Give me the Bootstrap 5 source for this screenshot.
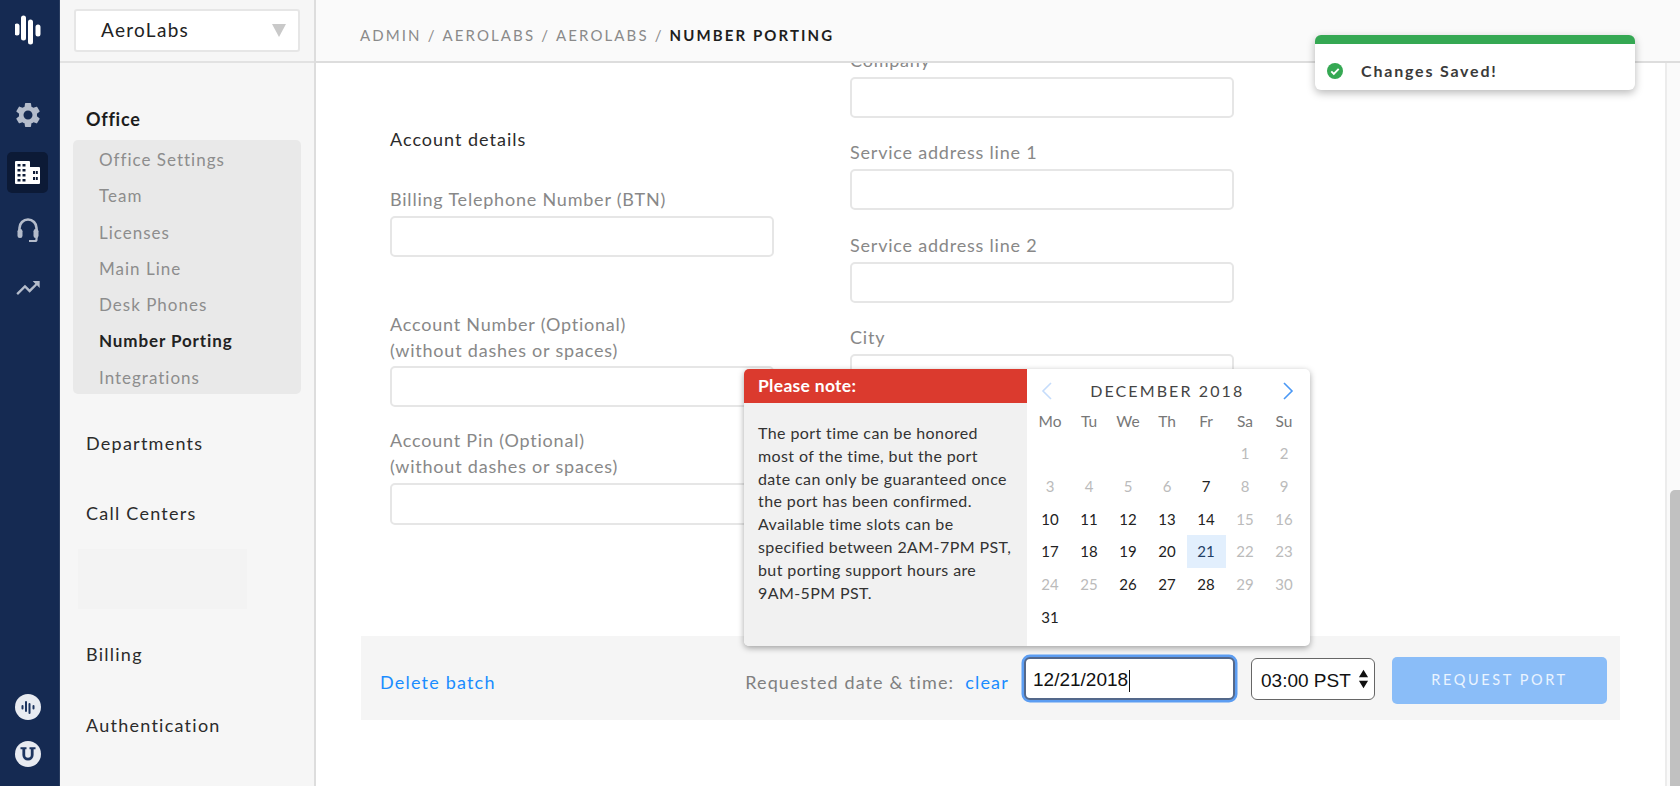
<!DOCTYPE html>
<html lang="en">
<head>
<meta charset="utf-8">
<title>Number Porting</title>
<link href="https://cdn.jsdelivr.net/npm/bootstrap@5.3.0/dist/css/bootstrap.min.css" rel="stylesheet">
<style>
html,body{height:786px;overflow:hidden}
body{font-family:Lato,"Liberation Sans",sans-serif;font-size:18px;color:#222;background:#fff;letter-spacing:.75px}
.app-shell{height:786px;overflow:hidden}
.rail{width:60px;background:#152a52;flex:none;padding-top:15px;overflow:hidden;border-right:1px solid #2a3d60}
.rail-logo{width:30px;height:30px;display:block;margin:0 auto 49px;flex:none}
.rail-item{width:41px;height:41px;border-radius:5px;margin:0 0 17px 7px;flex:none}
.rail-item.is-on{background:#0c1a36}
.rail-item.trend{margin-top:-1px}
.rail-dot{width:26px;height:26px;border-radius:50%;background:#e8ebf1;margin:0 0 21px 15px;flex:none}
.rail-foot{margin-bottom:-49px}
.sidepane{width:256px;flex:none;background:#f6f6f6;border-right:2px solid #ddd}
.side-top{height:63px;flex:none;border-bottom:2px solid #e2e2e2;padding:9px 14px 0 14px}
.org-pick{height:43px;background:#fff;border:2px solid #e6e6e6;border-radius:3px;padding:0 12px 0 25px;font-size:19px;letter-spacing:1.3px;color:#222}
.org-arrow{width:0;height:0;border-left:7.5px solid transparent;border-right:7.5px solid transparent;border-top:13px solid #c9c9c9}
.side-head{line-height:24px;padding-left:26px;color:#2b2b2b;font-size:18px;letter-spacing:1.25px}
.side-head.first{margin-top:44px;font-weight:700;color:#1c1c1c;letter-spacing:.75px}
.side-head.dept{margin-top:37px}
.side-head.call{margin-top:46px}
.side-head.auth{margin-top:47px}
.side-group{margin:9px 13px 0 13px;height:254px;background:#e9e9e9;border-radius:5px;padding:2px 0 0 26px;flex:none}
.side-link{display:block;line-height:36.3px;color:#8d8d8d;text-decoration:none;font-size:17px;letter-spacing:1px}
.side-link.is-on{color:#222;font-weight:700;letter-spacing:.9px}
.side-blank{width:169px;height:60px;background:#f3f3f3;margin:24px 0 33px 18px;flex:none}
.mainpane{min-width:0}
.crumbs{height:63px;flex:none;background:#fafafa;border-bottom:2px solid #ddd;padding:10px 0 0 44px;font-size:15px;letter-spacing:2.1px;color:#8a8a8a;text-transform:uppercase;line-height:1}
.crumbs b{color:#1e1e1e;font-weight:700;letter-spacing:2.1px}
.crumbs span{margin-right:6px}
.scroll-area{min-height:0}
.scroll-body{padding:0 45px;min-width:0}
.form-area{height:573px;overflow:hidden;padding-left:29px;gap:76px}
.form-col{width:384px}
.form-col.left{padding-top:64px}
.form-col.right{margin-top:-15px}
.sect-title{line-height:24px;margin-bottom:36px;color:#2b2b2b;letter-spacing:1px}
.fld-label{display:block;line-height:24px;margin-bottom:5px;color:#888;letter-spacing:.79px}
.fld-label.two{line-height:25.7px;margin-bottom:3px}
.fld-label.tight{margin-bottom:3px}
.fld-box{height:41px;border:2px solid #e6e6e6;border-radius:5px;background:#fff;margin-bottom:22.4px;padding:0}
.left .fld-box.a{margin-bottom:55px}
.left .fld-box.b{margin-bottom:21px}
.left .fld-box.c{height:42px}
.action-bar{height:84px;background:#f5f5f5;padding:0 13px 0 19px}
.act-link{color:#1a8cff;text-decoration:none;font-size:18px;letter-spacing:1.2px;margin-top:8px}
.act-note{color:#808080;margin-left:auto;letter-spacing:1.1px;margin-top:8px}
.act-clear{margin:8px 15px 0 11px}
.date-box{width:211px;height:43px;background:#fff;border:2px solid #54688a;border-radius:6px;box-shadow:0 0 0 2.5px #5c9df2;padding:4px 7px 0;font-size:19px;letter-spacing:0;font-family:"Liberation Sans",sans-serif;color:#111;margin-top:1px}
.caret-line{display:inline-block;width:1px;height:22px;background:#111;margin-left:1px}
.time-box{width:124px;height:42px;margin:1px 0 0 16px;border:1.5px solid #666;border-radius:6px;background-color:#fff;padding:5px 0 0 9px;font-size:19px;letter-spacing:0;font-family:"Liberation Sans",sans-serif;color:#111;box-shadow:none;background-size:11px 22px;background-position:right 5px center;background-repeat:no-repeat;background-image:url("data:image/svg+xml,%3Csvg xmlns='http://www.w3.org/2000/svg' viewBox='0 0 12 22'%3E%3Cpath d='M6 1l5 8H1zM6 21l-5-8h10z' fill='%23111'/%3E%3C/svg%3E")}
.req-btn{width:215px;height:47px;margin:4px 0 0 17px;background:#8abdf8;border:0;border-radius:5px;color:#fff;font-size:14.5px;letter-spacing:2.6px;opacity:1}
.req-btn:disabled{background:#8abdf8;color:#eaf4ff;opacity:1}
.track{width:15px;flex:none;background:#fafafa;border-left:2px solid #ececec;padding:427px 0 0 3px}
.thumb{width:10px;height:296px;background:#c1c1c1;border-radius:5px 0 0 0}
.toast-saved{position:absolute;left:999px;top:35px;width:320px;height:55px;background:#fff;border-top:9px solid #35a853;border-radius:6px;box-shadow:0 3px 8px rgba(0,0,0,.28);padding:8px 0 0 12px;font-size:16px;letter-spacing:1.8px;color:#3a3a3a;font-weight:700;gap:14px;z-index:5}
.date-pop{position:absolute;left:428px;top:369px;width:566px;height:277px;background:#fff;border-radius:5px;box-shadow:0 2px 6px rgba(0,0,0,.35);overflow:hidden;z-index:4}
.note-pane{width:283px;background:#f1f1f1;flex:none}
.note-head{height:34px;background:#db3a2e;color:#fff;font-weight:700;font-size:17.5px;line-height:34px;padding-left:14px;letter-spacing:.3px}
.note-body{padding:19px 15px 0 14px;font-size:16px;line-height:22.8px;color:#333;letter-spacing:.4px}
.cal-pane{flex:1;padding:0 3px 0 3.5px}
.cal-title{height:43px;margin-bottom:-7.5px;padding:0 13px 0 10px;font-size:16px;letter-spacing:2.1px;color:#444}
.cal-grid{display:grid;grid-template-columns:repeat(7,39px);grid-auto-rows:32.7px;text-align:center;font-size:15px;letter-spacing:0;color:#222;line-height:32px}
.cal-grid .wk{color:#777;font-size:15.5px}
.cal-grid .off{color:#bbb}
.cal-grid .pick{background:#e2effd;color:#1f3f66}
</style>
</head>
<body>
<div class="app-shell d-flex position-relative">
  <nav class="rail d-flex flex-column">
    <svg class="rail-logo" viewBox="0 0 30 30"><g stroke="#fff" stroke-width="5" stroke-linecap="round"><path d="M2 11v7M8.500 3v20M15.500 7v20M23 12v7"/></g></svg>
    <div class="rail-item d-flex align-items-center justify-content-center">
      <svg width="30" height="30" viewBox="0 0 24 24" fill="#b4bccb"><path d="M19.14 12.94c.04-.3.06-.61.06-.94 0-.32-.02-.64-.07-.94l2.03-1.58c.18-.14.23-.41.12-.61l-1.92-3.32c-.12-.22-.37-.29-.59-.22l-2.39.96c-.5-.38-1.03-.7-1.62-.94l-.36-2.54c-.04-.24-.24-.41-.48-.41h-3.84c-.24 0-.43.17-.47.41l-.36 2.54c-.59.24-1.13.57-1.62.94l-2.39-.96c-.22-.08-.47 0-.59.22L2.74 8.87c-.12.21-.08.47.12.61l2.03 1.58c-.05.3-.09.63-.09.94s.02.64.07.94l-2.03 1.58c-.18.14-.23.41-.12.61l1.92 3.32c.12.22.37.29.59.22l2.39-.96c.5.38 1.03.7 1.62.94l.36 2.54c.05.24.24.41.48.41h3.84c.24 0 .44-.17.47-.41l.36-2.54c.59-.24 1.13-.56 1.62-.94l2.39.96c.22.08.47 0 .59-.22l1.92-3.32c.12-.22.07-.47-.12-.61l-2.01-1.58zM12 15.6c-1.98 0-3.6-1.62-3.6-3.6s1.62-3.6 3.6-3.6 3.6 1.62 3.6 3.6-1.62 3.6-3.6 3.6z"/></svg>
    </div>
    <div class="rail-item is-on d-flex align-items-center justify-content-center">
      <svg width="25" height="24" viewBox="0 0 25 24"><path fill="#fff" fill-rule="evenodd" d="M1 0h13a1 1 0 0 1 1 1v5h9a1 1 0 0 1 1 1v15a1 1 0 0 1-1 1H1a1 1 0 0 1-1-1V1a1 1 0 0 1 1-1zM2.500 3v2.500h3V3zM7.500 3v2.500h3V3zM2.500 8v2.500h3V8zM7.500 8v2.500h3V8zM2.500 13v2.500h3V13zM7.500 13v2.500h3V13zM2.500 18v2.500h3V18zM7.500 18v2.500h3V18zM18 10v3h2v-3zM18 16v3h2v-3zM20.800 10v3h2v-3zM20.800 16v3h2v-3z"/></svg>
    </div>
    <div class="rail-item d-flex align-items-center justify-content-center">
      <svg width="22" height="25" viewBox="0 0 22 25" fill="none"><path d="M2.500 13V10a8.500 8.500 0 0 1 17 0v3" stroke="#b4bccb" stroke-width="2.600"/><rect x="0.500" y="11" width="5" height="9" rx="2.300" fill="#b4bccb"/><rect x="16.500" y="11" width="5" height="9" rx="2.300" fill="#b4bccb"/><path d="M19.500 19v2.500a1.500 1.500 0 0 1-1.500 1.500h-6" stroke="#b4bccb" stroke-width="2.200"/></svg>
    </div>
    <div class="rail-item trend d-flex align-items-center justify-content-center">
      <svg width="28" height="28" viewBox="0 0 24 24" fill="#b4bccb"><path d="M16 6l2.290 2.290-4.880 4.880-4-4L2 16.590 3.410 18l6-6 4 4 6.300-6.290L22 12V6z"/></svg>
    </div>
    <div class="rail-foot mt-auto d-flex flex-column">
      <div class="rail-dot d-flex align-items-center justify-content-center">
        <svg width="14" height="14" viewBox="0 0 14 14"><g stroke="#1d3560" stroke-width="2" stroke-linecap="round"><path d="M1.500 6v2.500M5 2v9M8.500 4v9M12.500 6v2.500"/></g></svg>
      </div>
      <div class="rail-dot d-flex align-items-center justify-content-center">
        <svg width="16" height="15" viewBox="0 0 16 15" fill="none"><path d="M3.800 1.500v6.500a4.200 4.200 0 0 0 8.400 0V1.500" stroke="#1d3560" stroke-width="2.800"/><path d="M.5 1.300h6M9.500 1.300h6" stroke="#1d3560" stroke-width="2"/></svg>
      </div>
      <div class="rail-dot"></div>
    </div>
  </nav>

  <aside class="sidepane d-flex flex-column">
    <div class="side-top">
      <div class="org-pick d-flex align-items-center justify-content-between">
        <span>AeroLabs</span><span class="org-arrow"></span>
      </div>
    </div>
    <div class="side-head first">Office</div>
    <div class="side-group">
      <a class="side-link" href="#">Office Settings</a>
      <a class="side-link" href="#">Team</a>
      <a class="side-link" href="#">Licenses</a>
      <a class="side-link" href="#">Main Line</a>
      <a class="side-link" href="#">Desk Phones</a>
      <a class="side-link is-on" href="#">Number Porting</a>
      <a class="side-link" href="#">Integrations</a>
    </div>
    <div class="side-head dept">Departments</div>
    <div class="side-head call">Call Centers</div>
    <div class="side-blank"></div>
    <div class="side-head">Billing</div>
    <div class="side-head auth">Authentication</div>
  </aside>

  <div class="mainpane flex-grow-1 d-flex flex-column position-relative">
    <header class="crumbs d-flex align-items-center">
      <span>Admin</span><span>/</span><span>AeroLabs</span><span>/</span><span>AeroLabs</span><span>/</span><b>Number Porting</b>
    </header>
    <div class="scroll-area flex-grow-1 d-flex">
      <div class="scroll-body flex-grow-1">
        <div class="form-area d-flex">
          <div class="form-col left">
            <div class="sect-title">Account details</div>
            <label class="fld-label">Billing Telephone Number (BTN)</label>
            <input class="form-control fld-box a" type="text">
            <label class="fld-label two">Account Number (Optional)<br>(without dashes or spaces)</label>
            <input class="form-control fld-box b" type="text">
            <label class="fld-label two tight">Account Pin (Optional)<br>(without dashes or spaces)</label>
            <input class="form-control fld-box c" type="text">
          </div>
          <div class="form-col right">
            <label class="fld-label">Company</label>
            <input class="form-control fld-box" type="text">
            <label class="fld-label">Service address line 1</label>
            <input class="form-control fld-box" type="text">
            <label class="fld-label">Service address line 2</label>
            <input class="form-control fld-box" type="text">
            <label class="fld-label">City</label>
            <input class="form-control fld-box" type="text">
          </div>
        </div>
        <div class="action-bar d-flex align-items-center">
          <a class="act-link" href="#">Delete batch</a>
          <span class="act-note">Requested date &amp; time:</span>
          <a class="act-link act-clear" href="#">clear</a>
          <div class="date-box d-flex align-items-center">12/21/2018<span class="caret-line"></span></div>
          <select class="form-select time-box"><option>03:00 PST</option></select>
          <button class="btn req-btn" disabled>REQUEST PORT</button>
        </div>
      </div>
      <div class="track"><div class="thumb"></div></div>
    </div>

    <div class="toast-saved d-flex align-items-center">
      <svg width="16" height="16" viewBox="0 0 16 16"><circle cx="8" cy="8" r="8" fill="#35a853"/><path d="M4.300 8.300l2.500 2.500 4.900-5" fill="none" stroke="#fff" stroke-width="1.900"/></svg>
      <span class="ms-1">Changes Saved!</span>
    </div>

    <div class="date-pop d-flex">
      <div class="note-pane">
        <div class="note-head">Please note:</div>
        <div class="note-body">The port time can be honored most of the time, but the port date can only be guaranteed once the port has been confirmed. Available time slots can be specified between 2AM-7PM PST, but porting support hours are 9AM-5PM PST.</div>
      </div>
      <div class="cal-pane">
        <div class="cal-title d-flex align-items-center justify-content-between">
          <svg width="12" height="18" viewBox="0 0 12 18" fill="none"><path d="M10 1L2 9l8 8" stroke="#c5dcfb" stroke-width="1.600"/></svg>
          <span>DECEMBER 2018</span>
          <svg width="12" height="18" viewBox="0 0 12 18" fill="none"><path d="M2 1l8 8-8 8" stroke="#4a98f5" stroke-width="1.600"/></svg>
        </div>
        <div class="cal-grid">
          <div class="wk">Mo</div><div class="wk">Tu</div><div class="wk">We</div><div class="wk">Th</div><div class="wk">Fr</div><div class="wk">Sa</div><div class="wk">Su</div>
          <div></div><div></div><div></div><div></div><div></div><div class="off">1</div><div class="off">2</div>
          <div class="off">3</div><div class="off">4</div><div class="off">5</div><div class="off">6</div><div>7</div><div class="off">8</div><div class="off">9</div>
          <div>10</div><div>11</div><div>12</div><div>13</div><div>14</div><div class="off">15</div><div class="off">16</div>
          <div>17</div><div>18</div><div>19</div><div>20</div><div class="pick">21</div><div class="off">22</div><div class="off">23</div>
          <div class="off">24</div><div class="off">25</div><div>26</div><div>27</div><div>28</div><div class="off">29</div><div class="off">30</div>
          <div>31</div>
        </div>
      </div>
    </div>
  </div>
</div>
<script src="https://cdn.jsdelivr.net/npm/bootstrap@5.3.0/dist/js/bootstrap.bundle.min.js"></script>
</body>
</html>
